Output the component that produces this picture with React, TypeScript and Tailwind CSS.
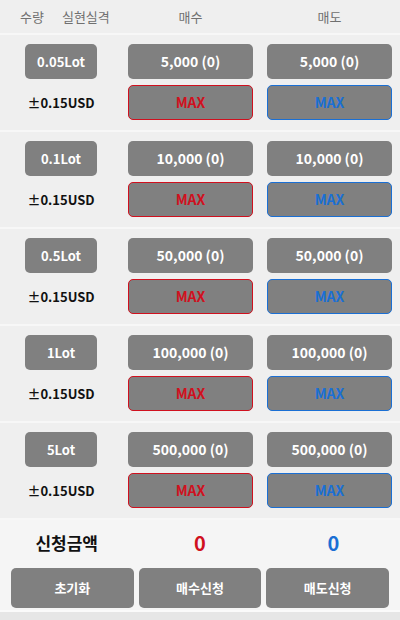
const rows = [
  { lot: "0.05Lot", amount: "5,000 (0)" },
  { lot: "0.1Lot", amount: "10,000 (0)" },
  { lot: "0.5Lot", amount: "50,000 (0)" },
  { lot: "1Lot", amount: "100,000 (0)" },
  { lot: "5Lot", amount: "500,000 (0)" },
];

const font = { fontFamily: '"Noto Sans CJK KR", "Noto Sans", sans-serif' };

function GrayButton({ children, className = "" }: { children: React.ReactNode; className?: string }) {
  return (
    <button
      className={`flex h-[35px] items-center justify-center rounded-[5px] bg-[#808080] font-bold text-white ${className}`}
    >
      {children}
    </button>
  );
}

export default function App() {
  return (
    <div className="flex h-[620px] w-[400px] flex-col bg-[#efefef]" style={font}>
      {/* header */}
      <div className="grid h-[33px] grid-cols-[114px_125px_125px] gap-x-[14px] items-center text-[13px] text-[#707070]">
        <div className="flex gap-[18px] pl-[20px]">
          <span>수량</span>
          <span>실현실격</span>
        </div>
        <div className="text-center">매수</div>
        <div className="text-center">매도</div>
      </div>

      {rows.map((r) => (
        <div
          key={r.lot}
          className="grid grid-cols-[114px_125px_125px] gap-x-[14px] gap-y-[6px] border-t-2 border-[#f7f7f7] pt-[9px] pb-[10px]"
        >
          <div className="pl-[25px]">
            <GrayButton className="w-[72px] text-[13px]">{r.lot}</GrayButton>
          </div>
          <GrayButton className="text-[14px]">{r.amount}</GrayButton>
          <GrayButton className="text-[14px]">{r.amount}</GrayButton>
          <div className="flex h-[35px] w-[122px] items-center justify-center text-[13px] font-bold text-[#111]">
            ±0.15USD
          </div>
          <button className="flex h-[35px] items-center justify-center rounded-[5px] border-[1.5px] border-[#d0101e] bg-[#808080] text-[14px] font-bold text-[#d0101e]">
            MAX
          </button>
          <button className="flex h-[35px] items-center justify-center rounded-[5px] border-[1.5px] border-[#1a6fd4] bg-[#808080] text-[14px] font-bold text-[#1a6fd4]">
            MAX
          </button>
        </div>
      ))}

      {/* summary */}
      <div className="flex flex-col border-t-2 border-[#f7f7f7] bg-[#f5f5f5] pt-[8px] pb-[2px]">
        <div className="grid h-[30px] grid-cols-3 items-center text-center">
          <span className="text-[17px] font-bold text-[#111]">신청금액</span>
          <span className="text-[20px] font-bold text-[#d0101e]">0</span>
          <span className="text-[20px] font-bold text-[#1a6fd4]">0</span>
        </div>
        <div className="mt-[10px] grid grid-cols-3 gap-[5px] px-[11px]">
          <button className="h-[40px] rounded-[5px] bg-[#808080] text-[13px] font-semibold text-white">초기화</button>
          <button className="h-[40px] rounded-[5px] bg-[#808080] text-[13px] font-semibold text-white">매수신청</button>
          <button className="h-[40px] rounded-[5px] bg-[#808080] text-[13px] font-semibold text-white">매도신청</button>
        </div>
      </div>
      <div className="flex-1 border-t-2 border-[#fafafa] bg-[#e6e6e6]" />
    </div>
  );
}
